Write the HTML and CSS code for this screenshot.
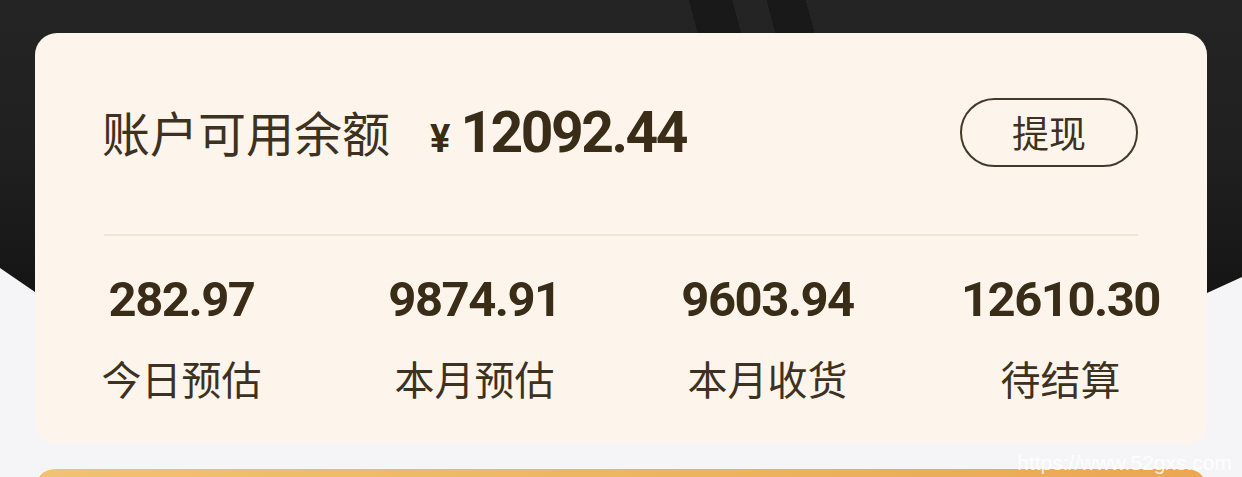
FILE: index.html
```html
<!DOCTYPE html>
<html lang="zh-CN">
<head>
<meta charset="utf-8">
<title>账户余额</title>
<link rel="stylesheet" href="styles.css">
</head>
<body>
<div class="page">
  <div class="card">
    <div class="head">
      <div class="balance">
        <span class="title">账户可用余额</span>
        <span class="amount"><span class="yen">¥</span>12092.44</span>
      </div>
      <button class="withdraw">提现</button>
    </div>
    <div class="divider"></div>
    <div class="stats">
      <div class="stat"><div class="num">282.97</div><div class="label">今日预估</div></div>
      <div class="stat"><div class="num">9874.91</div><div class="label">本月预估</div></div>
      <div class="stat"><div class="num">9603.94</div><div class="label">本月收货</div></div>
      <div class="stat"><div class="num">12610.30</div><div class="label">待结算</div></div>
    </div>
  </div>
  <div class="orange"></div>
  <div class="watermark">https://www.52gxs.com</div>
</div>
</body>
</html>
```

FILE: styles.css
```css
* { box-sizing: border-box; }
html, body { margin: 0; padding: 0; }
body {
  width: 1242px;
  height: 477px;
  overflow: hidden;
  background: #f5f5f7;
  font-family: "Noto Sans CJK SC", "Noto Sans", sans-serif;
}
.page {
  position: relative;
  width: 1242px;
  height: 477px;
  padding: 33px 35px 0;
}
.page::before {
  content: "";
  position: absolute;
  left: 0;
  top: 0;
  width: 1242px;
  height: 420px;
  z-index: 0;
  background:
    linear-gradient(75deg, transparent 774px, rgba(0,0,0,0.3) 774px, rgba(0,0,0,0.3) 816px, transparent 816px, transparent 849px, rgba(0,0,0,0.3) 849px, rgba(0,0,0,0.3) 887px, transparent 887px),
    linear-gradient(to bottom, #242424 0, #202020 150px, #151515 290px);
  clip-path: polygon(0 0, 100% 0, 100% 277px, 1207px 293px, 621px 420px, 35px 292px, 0 268px);
}
.card {
  position: relative;
  z-index: 1;
  height: 411px;
  background: #fdf5eb;
  border-radius: 22px;
  color: #3b2e1b;
}
.head {
  display: flex;
  align-items: center;
  justify-content: space-between;
  padding: 65px 69px 0 67px;
  height: 134px;
}
.balance {
  display: flex;
  align-items: baseline;
}
.title {
  font-size: 48px;
  font-weight: 400;
  color: #3d3221;
  line-height: 1;
}
.amount {
  margin-left: 40px;
  font-family: Roboto, "Liberation Sans", sans-serif;
  font-weight: 700;
  font-size: 57px;
  letter-spacing: -2.5px;
  line-height: 1;
  color: #3a2d18;
}
.yen {
  font-size: 38px;
  margin-right: 10px;
  letter-spacing: 0;
}
.withdraw {
  width: 178px;
  height: 69px;
  border: 2px solid #45382a;
  border-radius: 35px;
  background: transparent;
  font-family: "Noto Sans CJK SC", sans-serif;
  font-size: 37px;
  color: #3d3221;
  padding: 0;
  line-height: 1;
}
.divider {
  height: 2px;
  margin: 67px 69px 0;
  background: #efe6da;
}
.stats {
  display: grid;
  grid-template-columns: repeat(4, 1fr);
  padding-top: 39px;
  text-align: center;
}
.num {
  font-family: Roboto, "Liberation Sans", sans-serif;
  font-weight: 700;
  font-size: 49px;
  line-height: 50px;
  letter-spacing: -1.5px;
  color: #3a2d18;
}
.label {
  margin-top: 31px;
  font-size: 40px;
  line-height: 44px;
  color: #3d3221;
}
.orange {
  margin-top: 25px;
  height: 30px;
  border-radius: 20px 20px 0 0;
  background: linear-gradient(to right, #f1c273, #eba752);
}
.watermark {
  position: absolute;
  right: 10px;
  bottom: 2px;
  z-index: 2;
  font-family: "Liberation Sans", Arial, sans-serif;
  font-size: 21px;
  color: rgba(255,255,255,0.85);
  line-height: 24px;
}
```
